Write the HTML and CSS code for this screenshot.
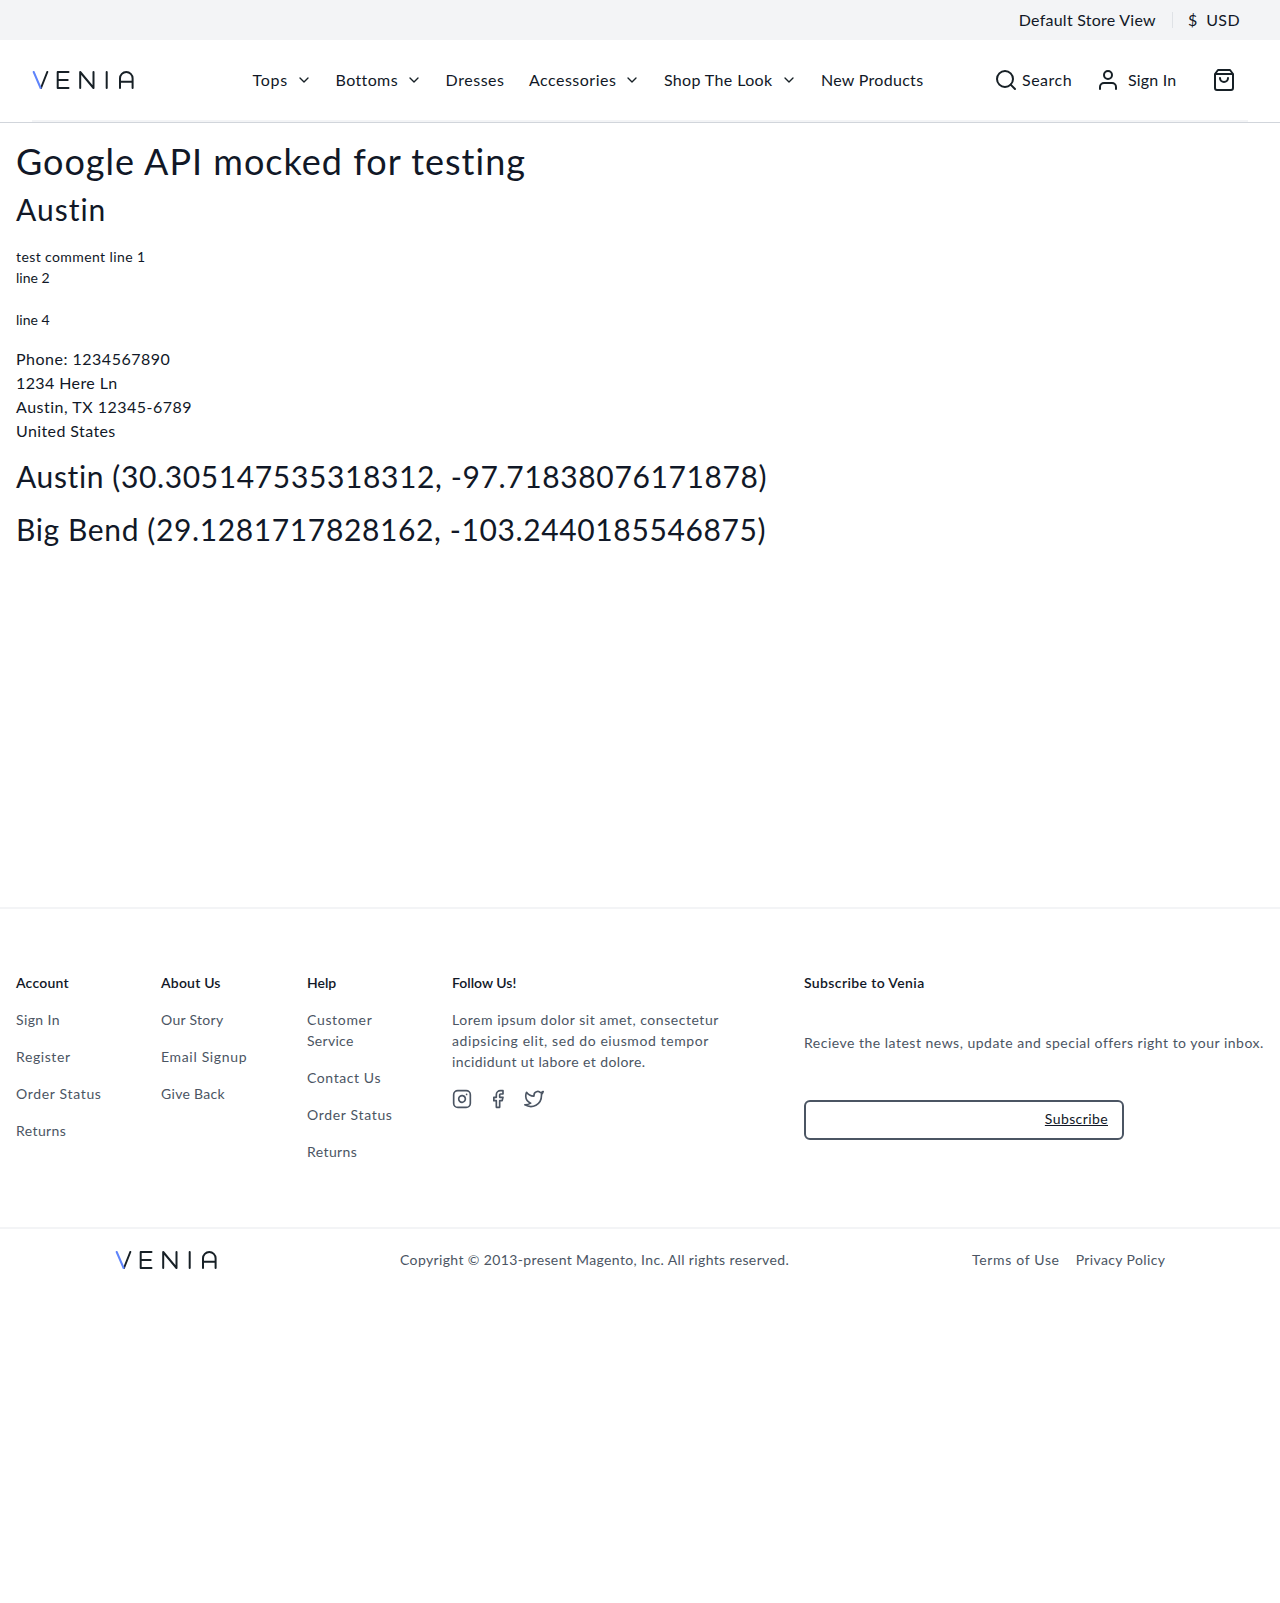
FILE: index.html
```
<!DOCTYPE html>
<html lang="en">
<head>
<meta charset="utf-8">
<title>Venia - Google Maps</title>
<link rel="stylesheet" href="styles.css">
</head>
<body>
<svg class="defs" aria-hidden="true">
  <symbol id="chevron" viewBox="0 0 24 24"><path d="M6 9l6 6 6-6"/></symbol>
  <symbol id="logo" viewBox="0 0 102 18">
    <path d="M15.300 1L9 17"/>
    <path class="logo-accent" d="M1.700 1L8.600 17"/>
    <path d="M36.500 1H25.700v16h10.800M25.700 9h10"/>
    <path d="M48.200 17V1L61.500 17V1"/>
    <path d="M74.700 1v16"/>
    <path d="M88 17V7.300a6.300 6.300 0 0 1 12.600 0V17M88 10.800h12.600"/>
  </symbol>
</svg>

<div class="topbar">
  <span class="t25">Default Store View</span>
  <span class="currency"><span>$</span><span class="t4">USD</span></span>
</div>

<header class="header">
  <div class="toolbar">
    <a class="brand"><svg class="logo"><use href="#logo"/></svg></a>
    <nav class="nav">
      <a class="t65"><span>Tops</span><svg class="chevron"><use href="#chevron"/></svg></a>
      <a class="t37"><span>Bottoms</span><svg class="chevron"><use href="#chevron"/></svg></a>
      <a class="t55">Dresses</a>
      <a class="t5"><span>Accessories</span><svg class="chevron"><use href="#chevron"/></svg></a>
      <a class="t37"><span>Shop The Look</span><svg class="chevron"><use href="#chevron"/></svg></a>
      <a class="t3">New Products</a>
    </nav>
    <div class="actions">
      <button class="search t5"><svg class="icon" viewBox="0 0 24 24"><circle cx="11" cy="11" r="8"/><path d="M21 21l-4.350-4.350"/></svg><span>Search</span></button>
      <button class="account t2"><svg class="icon" viewBox="0 0 24 24"><path d="M20 21v-2a4 4 0 0 0-4-4H8a4 4 0 0 0-4 4v2"/><circle cx="12" cy="7" r="4"/></svg><span>Sign In</span></button>
      <button class="cart"><svg class="icon" viewBox="0 0 24 24"><path d="M6 2L3 6v14a2 2 0 0 0 2 2h14a2 2 0 0 0 2-2V6l-3-4zM3 6h18M16 10a4 4 0 0 1-8 0"/></svg></button>
    </div>
  </div>
</header>

<main class="main">
  <h1 class="t10">Google API mocked for testing</h1>
  <h2 class="store-name t10">Austin</h2>
  <p class="comment"><span class="t4">test comment line 1</span><br><span>line 2</span><br><br><span>line 4</span></p>
  <address class="address t4"><span class="t5">Phone: 1234567890</span><br>1234 Here Ln<br><span class="t5">Austin, TX 12345-6789</span><br>United States</address>
  <h2 class="location t62">Austin (30.305147535318312, -97.71838076171878)</h2>
  <h2 class="location t62">Big Bend (29.1281717828162, -103.2440185546875)</h2>
</main>

<footer class="footer">
  <div class="footer-links">
    <ul class="links">
      <li class="title t2">Account</li>
      <li class="t4">Sign In</li>
      <li class="t6">Register</li>
      <li class="t65">Order Status</li>
      <li class="t4">Returns</li>
    </ul>
    <ul class="links">
      <li class="title t2">About Us</li>
      <li class="t3">Our Story</li>
      <li class="t65">Email Signup</li>
      <li class="t3">Give Back</li>
    </ul>
    <ul class="links">
      <li class="title">Help</li>
      <li class="t65">Customer<br><span class="t3">Service</span></li>
      <li class="t6">Contact Us</li>
      <li class="t65">Order Status</li>
      <li class="t4">Returns</li>
    </ul>
    <div class="follow">
      <p class="title">Follow Us!</p>
      <p class="t55">Lorem ipsum dolor sit amet, consectetur<br><span class="t6">adipsicing elit, sed do eiusmod tempor</span><br><span class="t4">incididunt ut labore et dolore.</span></p>
      <div class="social">
        <svg viewBox="0 0 24 24"><rect x="2" y="2" width="20" height="20" rx="5"/><path d="M16 11.370A4 4 0 1 1 12.630 8 4 4 0 0 1 16 11.370zM17.500 6.500h.01"/></svg>
        <svg viewBox="0 0 24 24"><path d="M18 2h-3a5 5 0 0 0-5 5v3H7v4h3v8h4v-8h3l1-4h-4V7a1 1 0 0 1 1-1h3z"/></svg>
        <svg viewBox="0 0 24 24"><path d="M23 3a10.900 10.900 0 0 1-3.140 1.530 4.480 4.480 0 0 0-7.860 3v1A10.660 10.660 0 0 1 3 4s-4 9 5 13a11.640 11.640 0 0 1-7 2c9 5 20 0 20-11.500a4.500 4.500 0 0 0-.08-.83A7.720 7.720 0 0 0 23 3z"/></svg>
      </div>
    </div>
    <div class="newsletter">
      <p class="title t37">Subscribe to Venia</p>
      <p class="pitch t5">Recieve the latest news, update and special offers right to your inbox.</p>
      <form class="subscribe"><input type="email" aria-label="Email"><button type="button" class="t4">Subscribe</button></form>
    </div>
  </div>
  <div class="legal">
    <svg class="logo"><use href="#logo"/></svg>
    <p class="t37">Copyright © 2013-present Magento, Inc. All rights reserved.</p>
    <div class="policies"><a class="t65">Terms of Use</a><a class="t37">Privacy Policy</a></div>
  </div>
</footer>
</body>
</html>
```
FILE: styles.css
```
* { box-sizing: border-box; margin: 0; padding: 0; }

body {
  background: #fff;
  color: #111827;
  font: 400 16px/24px Lato, sans-serif;
}

ul { list-style: none; }

button, input {
  border: 0;
  background: none;
  color: inherit;
  font: inherit;
  outline: 0;
}

button { letter-spacing: inherit; }

svg {
  display: block;
  fill: none;
  stroke: currentColor;
  stroke-width: 2;
  stroke-linecap: round;
  stroke-linejoin: round;
}

.defs { display: none; }

/* Tracking */
.t2 { letter-spacing: .2px; }
.t25 { letter-spacing: .25px; }
.t3 { letter-spacing: .3px; }
.t37 { letter-spacing: .37px; }
.t4 { letter-spacing: .4px; }
.t5 { letter-spacing: .5px; }
.t55 { letter-spacing: .54px; }
.t6 { letter-spacing: .59px; }
.t62 { letter-spacing: .62px; }
.t65 { letter-spacing: .67px; }
.t10 { letter-spacing: 1px; }

/* Top bar */
.topbar {
  display: flex;
  align-items: center;
  justify-content: flex-end;
  height: 40px;
  padding-right: 40px;
  background: #f3f4f6;
}

.currency {
  display: flex;
  align-items: center;
  gap: 9px;
  height: 16px;
  margin-left: 16px;
  padding-left: 15px;
  border-left: 1px solid #dfe2e6;
}

/* Header */
.header {
  height: 83px;
  padding: 0 32px;
  border-bottom: 1px solid #d1d5db;
}

.toolbar {
  display: flex;
  align-items: center;
  height: 82px;
  border-bottom: 2px solid #f3f4f6;
}

.brand { width: 220.600px; }

.logo {
  width: 102px;
  height: 18px;
  color: #172026;
  stroke-width: 2;
}

.logo-accent { stroke: #5f84fb; }

.nav {
  display: grid;
  grid-template-columns: 59px 86px 59.300px 111px 133px auto;
  column-gap: 24px;
  white-space: nowrap;
}

.nav a {
  display: flex;
  align-items: center;
  justify-content: space-between;
}

.chevron { width: 16px; height: 16px; color: #172026; }
.icon { width: 24px; height: 24px; color: #172026; }

.actions {
  display: flex;
  margin-left: auto;
  padding-right: 12px;
}

.actions button { display: flex; align-items: center; }
.actions .search { width: 102px; gap: 4px; letter-spacing: .5px; }
.actions .account { width: 116px; gap: 8px; letter-spacing: .2px; }

/* Store locator */
.main { height: 784px; padding: 12px 16px 0; }

h1, h2 { font-weight: 400; }
h1 { font-size: 36px; line-height: 53px; }
h2 { font-size: 30px; line-height: 45px; }
.store-name { line-height: 43px; }
.comment { margin: 15px 0 17px; font-size: 14px; line-height: 21px; }
.address { margin-bottom: 11px; font-style: normal; }
.location { margin-bottom: 8px; }

/* Footer */
.footer {
  color: #4b5563;
  font-size: 14px;
  line-height: 21px;
  white-space: nowrap;
}

.footer-links {
  display: grid;
  grid-template-columns: 121px 122px 121px 328px auto;
  column-gap: 24px;
  height: 320px;
  padding: 63px 16px 0;
  border-top: 2px solid #f3f4f6;
}

.links { display: grid; gap: 16px; align-content: start; }
.title { color: #111827; font-weight: 600; }
.follow { display: grid; gap: 16px; align-content: start; }
.social { display: flex; gap: 16px; padding-top: 1px; }
.social svg { width: 20px; height: 20px; }
.pitch { margin: 39px 0 47px; }

.subscribe {
  display: flex;
  align-items: center;
  width: 320px;
  height: 40px;
  padding: 0 14px;
  border: 2px solid #4b5563;
  border-radius: 6px;
}

.subscribe input { flex: 1; min-width: 0; }

.subscribe button {
  padding-bottom: 4px;
  color: #111827;
  letter-spacing: .4px;
  line-height: 21px;
  text-decoration: underline;
  text-decoration-skip-ink: none;
}

.legal {
  display: grid;
  grid-template-columns: 285px 572px auto;
  align-items: center;
  height: 63px;
  padding-left: 115px;
  border-top: 2px solid #f3f4f6;
}

.policies { display: flex; gap: 16px; }
```
